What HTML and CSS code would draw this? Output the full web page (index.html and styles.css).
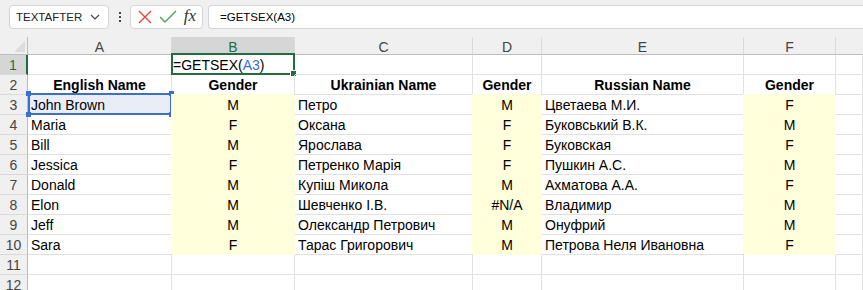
FILE: index.html
```html
<!DOCTYPE html>
<html lang="en">
<head>
    <meta charset="UTF-8">
    <title>GETSEX</title>
    <link rel="stylesheet" href="styles.css">
</head>
<body>
    <div class="toolbar">
        <div class="name-box">
            <span>TEXTAFTER</span>
            <svg width="10" height="6" viewBox="0 0 10 6"><path d="M1 1 L5 5 L9 1" fill="none" stroke="#444" stroke-width="1.2"/></svg>
        </div>
        <div class="dots"><i></i><i></i><i></i></div>
        <div class="btn-box">
            <svg width="14" height="14" viewBox="0 0 14 14"><path d="M1 1 L13 13 M13 1 L1 13" stroke="#e0443c" stroke-width="1.4"/></svg>
            <svg width="18" height="14" viewBox="0 0 18 14"><path d="M1 7 L6 12 L17 1" fill="none" stroke="#4c9f55" stroke-width="1.4"/></svg>
            <span class="fx">fx</span>
        </div>
        <div class="formula">=GETSEX(A3)</div>
    </div>

    <div class="sheet">
        <div class="corner"><span></span></div>
        <div class="col-head">A</div>
        <div class="col-head sel">B</div>
        <div class="col-head">C</div>
        <div class="col-head">D</div>
        <div class="col-head">E</div>
        <div class="col-head">F</div>
        <div class="col-head last"></div>

        <div class="row-head sel">1</div>
        <div class="cell"></div>
        <div class="cell active">=GETSEX(<span class="ref">A3</span>)</div>
        <div class="cell"></div>
        <div class="cell"></div>
        <div class="cell"></div>
        <div class="cell"></div>
        <div class="cell"></div>

        <div class="row-head">2</div>
        <div class="cell head">English Name</div>
        <div class="cell head">Gender</div>
        <div class="cell head">Ukrainian Name</div>
        <div class="cell head">Gender</div>
        <div class="cell head">Russian Name</div>
        <div class="cell head">Gender</div>
        <div class="cell"></div>

        <div class="row-head">3</div>
        <div class="cell picked">John Brown</div>
        <div class="cell mid fill">M</div>
        <div class="cell">Петро</div>
        <div class="cell mid fill">M</div>
        <div class="cell">Цветаева М.И.</div>
        <div class="cell mid fill">F</div>
        <div class="cell"></div>

        <div class="row-head">4</div>
        <div class="cell">Maria</div>
        <div class="cell mid fill">F</div>
        <div class="cell">Оксана</div>
        <div class="cell mid fill">F</div>
        <div class="cell">Буковський В.К.</div>
        <div class="cell mid fill">M</div>
        <div class="cell"></div>

        <div class="row-head">5</div>
        <div class="cell">Bill</div>
        <div class="cell mid fill">M</div>
        <div class="cell">Ярослава</div>
        <div class="cell mid fill">F</div>
        <div class="cell">Буковская</div>
        <div class="cell mid fill">F</div>
        <div class="cell"></div>

        <div class="row-head">6</div>
        <div class="cell">Jessica</div>
        <div class="cell mid fill">F</div>
        <div class="cell">Петренко Марія</div>
        <div class="cell mid fill">F</div>
        <div class="cell">Пушкин А.С.</div>
        <div class="cell mid fill">M</div>
        <div class="cell"></div>

        <div class="row-head">7</div>
        <div class="cell">Donald</div>
        <div class="cell mid fill">M</div>
        <div class="cell">Купіш Микола</div>
        <div class="cell mid fill">M</div>
        <div class="cell">Ахматова А.А.</div>
        <div class="cell mid fill">F</div>
        <div class="cell"></div>

        <div class="row-head">8</div>
        <div class="cell">Elon</div>
        <div class="cell mid fill">M</div>
        <div class="cell">Шевченко І.В.</div>
        <div class="cell mid fill">#N/A</div>
        <div class="cell">Владимир</div>
        <div class="cell mid fill">M</div>
        <div class="cell"></div>

        <div class="row-head">9</div>
        <div class="cell">Jeff</div>
        <div class="cell mid fill">M</div>
        <div class="cell">Олександр Петрович</div>
        <div class="cell mid fill">M</div>
        <div class="cell">Онуфрий</div>
        <div class="cell mid fill">M</div>
        <div class="cell"></div>

        <div class="row-head">10</div>
        <div class="cell">Sara</div>
        <div class="cell mid fill">F</div>
        <div class="cell">Тарас Григорович</div>
        <div class="cell mid fill">M</div>
        <div class="cell">Петрова Неля Ивановна</div>
        <div class="cell mid fill">F</div>
        <div class="cell"></div>

        <div class="row-head">11</div>
        <div class="cell"></div>
        <div class="cell"></div>
        <div class="cell"></div>
        <div class="cell"></div>
        <div class="cell"></div>
        <div class="cell"></div>
        <div class="cell"></div>

        <div class="row-head">12</div>
        <div class="cell"></div>
        <div class="cell"></div>
        <div class="cell"></div>
        <div class="cell"></div>
        <div class="cell"></div>
        <div class="cell"></div>
        <div class="cell"></div>
    </div>
</body>
</html>
```

FILE: styles.css
```css
body {
    margin: 0;
    font-family: "Liberation Sans", Arial, sans-serif;
    font-size: 14px;
    color: #000;
    background: #fff;
    overflow: hidden;
}
.toolbar {
    display: flex;
    align-items: center;
    height: 37px;
    padding: 0 0 3px 9px;
    box-sizing: border-box;
    background: #f0f0f0;
}
.name-box,
.btn-box,
.formula {
    height: 24px;
    box-sizing: border-box;
    background: #fff;
    border: 1px solid #d4d4d4;
    border-radius: 4px;
    display: flex;
    align-items: center;
}
.name-box {
    width: 100px;
    padding: 0 8px 0 6px;
    justify-content: space-between;
    font-size: 11.5px;
    color: #222;
}
.dots {
    width: 21px;
    display: flex;
    flex-direction: column;
    align-items: center;
    gap: 2px;
}
.dots i {
    width: 2px;
    height: 2px;
    background: #444;
}
.btn-box {
    width: 73px;
    padding: 0 6px 0 7px;
    justify-content: space-between;
}
.fx {
    font-family: "Liberation Serif", "Times New Roman", serif;
    font-style: italic;
    font-size: 17px;
    color: #333;
    margin-top: -3px;
}
.formula {
    flex: 1;
    margin-left: 5px;
    padding-left: 11px;
    font-size: 11.5px;
    border-right: none;
    border-radius: 4px 0 0 4px;
}
.sheet {
    display: grid;
    grid-template-columns: 28px 144px 123px 178px 69px 202px 92px 1fr;
    grid-template-rows: 18px;
    grid-auto-rows: 20px;
}
.corner,
.col-head,
.row-head {
    background: #f0f0f0;
    color: #444;
    display: flex;
    align-items: center;
    justify-content: center;
    box-sizing: border-box;
}
.corner {
    border-right: 1px solid #bcbcbc;
    border-bottom: 1px solid #bcbcbc;
    position: relative;
}
.corner span {
    position: absolute;
    right: 2px;
    bottom: 2px;
    width: 0;
    height: 0;
    border-left: 11px solid transparent;
    border-bottom: 11px solid #dcdcdc;
}
.col-head {
    border-right: 1px solid #dadada;
    border-bottom: 1px solid #bcbcbc;
    padding-top: 2px;
}
.col-head.last {
    border-right: none;
}
.col-head.sel {
    background: #d6d6d6;
    color: #1e6e42;
    border-bottom: 2px solid #1e6e42;
    padding-top: 3px;
}
.row-head {
    border-right: 1px solid #bcbcbc;
    border-bottom: 1px solid #dadada;
    padding-top: 1px;
}
.row-head.sel {
    background: #d6d6d6;
    color: #1e6e42;
    border-right: 2px solid #1e6e42;
}
.cell {
    box-sizing: border-box;
    border-right: 1px solid #e1e1e1;
    border-bottom: 1px solid #e1e1e1;
    padding: 0 3px;
    line-height: 20px;
    white-space: nowrap;
    position: relative;
}
.cell.head {
    font-weight: bold;
    text-align: center;
}
.cell.mid {
    text-align: center;
}
.cell.fill {
    background: #ffffdb;
    border-color: #ffffdb;
    box-shadow: -1px -1px 0 #ffffdb;
}
.cell.active {
    padding-left: 1px;
}
.cell.active::before {
    content: "";
    position: absolute;
    left: -1px;
    top: -2px;
    right: -1px;
    bottom: -1px;
    border: 2px solid #1e6e42;
}
.cell.active::after {
    content: "";
    position: absolute;
    right: -3px;
    bottom: -3px;
    width: 5px;
    height: 5px;
    background: #1e6e42;
    border: 1px solid #fff;
}
.ref {
    color: #3a6fd0;
}
.cell.picked {
    background: #e8edf7;
}
.cell.picked::before {
    content: "";
    position: absolute;
    left: 0;
    top: -2px;
    right: -1px;
    bottom: -1px;
    border: 2px solid #3a6fd0;
}
.cell.picked::after {
    content: "";
    position: absolute;
    left: -2px;
    top: -4px;
    right: -3px;
    bottom: -3px;
    background:
        linear-gradient(#3a6fd0, #3a6fd0) left top / 5px 5px no-repeat,
        linear-gradient(#3a6fd0, #3a6fd0) right top / 5px 5px no-repeat,
        linear-gradient(#3a6fd0, #3a6fd0) left bottom / 5px 5px no-repeat,
        linear-gradient(#3a6fd0, #3a6fd0) right bottom / 5px 5px no-repeat;
}
```
